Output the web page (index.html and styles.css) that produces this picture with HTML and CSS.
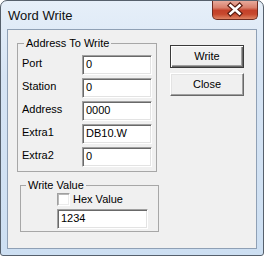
FILE: index.html
```html
<!DOCTYPE html>
<html>
<head>
<meta charset="utf-8">
<link rel="stylesheet" href="styles.css">
</head>
<body>
<div class="window">
  <div class="titlebar">
    <span class="title">Word Write</span>
    <div class="close">
      <svg width="44" height="19" viewBox="0 0 44 19">
        <path d="M17.5 5.5 L26.5 13.5 M26.5 5.5 L17.5 13.5" stroke="#5b1d12" stroke-width="5" stroke-linecap="square" fill="none"/>
        <path d="M17.5 5.5 L26.5 13.5 M26.5 5.5 L17.5 13.5" stroke="#ffffff" stroke-width="2.6" stroke-linecap="square" fill="none"/>
      </svg>
    </div>
  </div>
  <div class="client">
    <div class="left">
      <fieldset class="group g1">
        <legend>Address To Write</legend>
        <div class="row"><span class="lbl">Port</span><div class="edit">0</div></div>
        <div class="row"><span class="lbl">Station</span><div class="edit">0</div></div>
        <div class="row"><span class="lbl">Address</span><div class="edit">0000</div></div>
        <div class="row"><span class="lbl">Extra1</span><div class="edit">DB10.W</div></div>
        <div class="row"><span class="lbl">Extra2</span><div class="edit">0</div></div>
      </fieldset>
      <fieldset class="group g2">
        <legend>Write Value</legend>
        <div class="g2body">
          <div class="check"><span class="box"></span><span>Hex Value</span></div>
          <div class="edit wide">1234</div>
        </div>
      </fieldset>
    </div>
    <div class="right">
      <div class="btn default">Write</div>
      <div class="btn">Close</div>
    </div>
  </div>
</div>
</body>
</html>
```
FILE: styles.css
```css
* { box-sizing: border-box; }
body {
  margin: 0;
  background: #ffffff;
  font-family: "Liberation Sans", Arial, sans-serif;
  font-size: 11px;
  color: #000;
}
.window {
  width: 264px;
  height: 256px;
  border: 1px solid #56606c;
  border-radius: 7px 7px 3px 3px;
  background: linear-gradient(#e6eff9, #d6e4f4 30%, #cddff2 100%);
  display: flex;
  flex-direction: column;
  overflow: hidden;
}
.titlebar {
  height: 28px;
  flex: none;
  display: flex;
  justify-content: space-between;
  align-items: flex-start;
  padding-left: 7px;
}
.title {
  font-size: 13px;
  line-height: 15px;
  padding-top: 7px;
  color: #101010;
}
.close {
  width: 46px;
  height: 20px;
  margin-top: -1px;
  margin-right: 5px;
  border: 1px solid #6e2b20;
  border-top: none;
  border-radius: 0 0 5px 5px;
  background: linear-gradient(#eab0a3 0%, #d9806c 40%, #c4412a 55%, #c7482e 75%, #de8464 100%);
  display: flex;
  align-items: center;
  justify-content: center;
}
.close svg { display: block; }
.client {
  margin: 0 6px;
  height: 220px;
  flex: none;
  border: 1px solid #8fa0b5;
  background: #f0f0f0;
  display: flex;
  align-items: flex-start;
}
.left {
  width: 151px;
  flex: none;
  padding-top: 7px;
  display: flex;
  flex-direction: column;
  align-items: flex-start;
}
.group {
  margin: 0;
  border: 1px solid #a7a7a7;
  min-width: 0;
}
.group legend {
  padding: 0 2px;
  font-size: 11px;
  line-height: 13px;
}
.g1 {
  margin-left: 9px;
  width: 140px;
  padding: 5px 3px 4px 4px;
}
.g1 legend { margin-left: 2px; }
.g2 {
  margin-left: 12px;
  margin-top: 7px;
  width: 139px;
  padding: 1px 0 2px 5px;
}
.g2 legend { margin-left: 0; }
.g2body {
  margin-left: 31px;
  display: flex;
  flex-direction: column;
}
.row {
  display: flex;
  align-items: flex-start;
  height: 20px;
  margin-bottom: 3px;
}
.row:last-child { margin-bottom: 0; }
.lbl {
  width: 60px;
  padding-top: 1px;
  line-height: 14px;
}
.edit {
  width: 70px;
  height: 20px;
  background: #fff;
  border: 1px solid;
  border-color: #a0a0a0 #ffffff #ffffff #a0a0a0;
  box-shadow: inset 1px 1px 0 #696969, inset -1px -1px 0 #e3e3e3;
  padding: 1px 0 0 3px;
  line-height: 14px;
  white-space: nowrap;
}
.edit.wide {
  width: 91px;
  margin-top: 3px;
  padding-left: 3px;
}
.check {
  display: flex;
  align-items: center;
  height: 13px;
  line-height: 13px;
}
.box {
  width: 13px;
  height: 13px;
  background: #fff;
  border: 1px solid;
  border-color: #a0a0a0 #ffffff #ffffff #a0a0a0;
  box-shadow: inset 1px 1px 0 #b8b8b8, inset -1px -1px 0 #ececec;
  margin-right: 3px;
}
.right {
  margin-left: 11px;
  padding-top: 15px;
  display: flex;
  flex-direction: column;
  gap: 5px;
}
.btn {
  width: 74px;
  height: 23px;
  background: #f0f0f0;
  border: 1px solid;
  border-color: #ffffff #696969 #696969 #ffffff;
  box-shadow: inset -1px -1px 0 #a0a0a0, inset 1px 1px 0 #e3e3e3;
  text-align: center;
  line-height: 20px;
  color: #000;
}
.btn.default {
  border: 1px solid #3a3a3a;
  box-shadow: inset 1px 1px 0 #ffffff, inset -1px -1px 0 #696969, inset -2px -2px 0 #a0a0a0;
}
```
